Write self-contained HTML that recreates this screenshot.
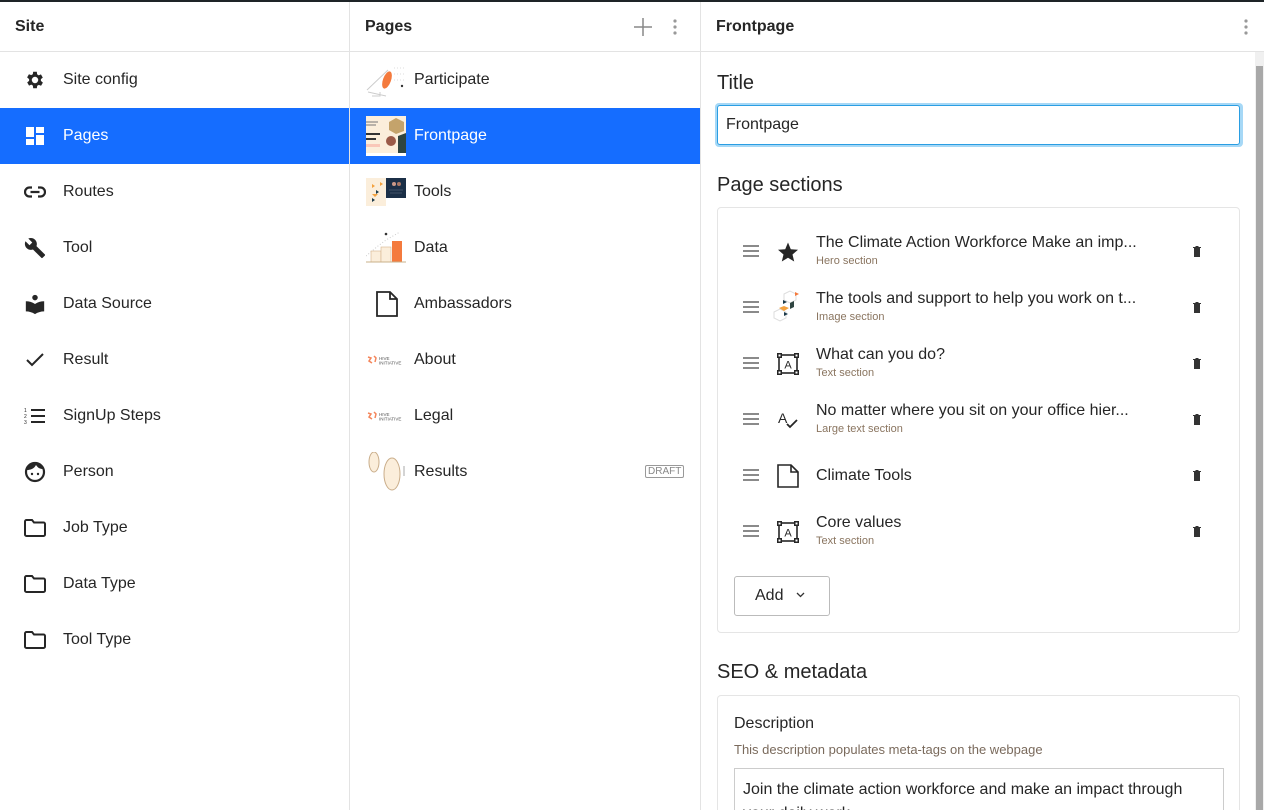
<!DOCTYPE html>
<html style="width:1264px;height:810px;overflow:hidden"><head><meta charset="utf-8"><style>
*{box-sizing:border-box;margin:0;padding:0}
body{width:1264px;height:810px;overflow:hidden;background:#fff;font-family:"Liberation Sans",sans-serif;color:#262626;position:relative}
.top{position:absolute;left:0;top:0;width:1264px;height:2px;background:#1e2427}
.col{position:absolute;top:2px;height:808px;border-right:1px solid #e3e3e3}
.hd{height:50px;border-bottom:1px solid #e3e3e3;display:flex;align-items:center;padding-left:15px;font-weight:bold;font-size:16px;position:relative}
.row{height:56px;display:flex;align-items:center;font-size:16px;position:relative}
.row.sel{background:#156dff;color:#fff}
.ic{width:24px;height:24px;margin-left:23px;margin-right:16px;display:flex;align-items:center;justify-content:center}
.th{width:40px;height:40px;margin-left:16px;margin-right:8px;position:relative;overflow:hidden}
.h2{font-size:20px;position:absolute;left:717px}
.card{position:absolute;left:717px;width:523px;border:1px solid #e5e5e5;border-radius:4px;overflow:hidden}
.it{position:absolute;left:0;width:521px;height:56px}
.it .dr{position:absolute;left:25px;top:21px;width:16px}
.it .dr i{display:block;height:2px;background:#8a8a8a;margin-bottom:3px}
.it .si{position:absolute;left:58px;top:16px;width:24px;height:24px}
.it .t{position:absolute;left:98px;top:10px;font-size:16px;white-space:nowrap}
.it .s{position:absolute;left:98px;top:31px;font-size:11px;color:#8a7560}
.it .tr{position:absolute;left:475px;top:22px;width:8px;height:11px}
</style></head><body>
<div class="top"></div>

<div class="col" style="left:0;width:350px">
 <div class="hd">Site</div>
 <div class="row"><div class="ic"><svg width="22" height="22" viewBox="0 0 24 24"><path fill="#262626" d="M19.4 13a7.5 7.5 0 000-2l2.1-1.6-2-3.5-2.5 1a7 7 0 00-1.7-1L15 3h-4l-.4 2.7a7 7 0 00-1.7 1l-2.5-1-2 3.5L6.6 11a7.5 7.5 0 000 2l-2.1 1.6 2 3.5 2.5-1a7 7 0 001.7 1L11 21h4l.4-2.7a7 7 0 001.7-1l2.5 1 2-3.5zM13 15.5a3.5 3.5 0 110-7 3.5 3.5 0 010 7z" transform="translate(-1 0)"/></svg></div>Site config</div>
 <div class="row sel"><div class="ic"><svg width="20" height="20" viewBox="0 0 20 20"><path fill="#fff" d="M1 1h8v10H1zM11 1h8v6h-8zM11 9h8v10h-8zM1 13h8v6H1z"/></svg></div>Pages</div>
 <div class="row"><div class="ic"><svg width="22" height="12" viewBox="0 0 22 12"><path fill="none" stroke="#262626" stroke-width="2.2" d="M8 1.5H5.5a4.5 4.5 0 000 9H8M14 1.5h2.5a4.5 4.5 0 010 9H14M6.5 6h9"/></svg></div>Routes</div>
 <div class="row"><div class="ic"><svg width="22" height="22" viewBox="0 0 24 24"><path fill="#262626" d="M22.7 19l-9.1-9.1c.9-2.3.4-5-1.5-6.9-2-2-5-2.4-7.4-1.3L9 6 6 9 1.6 4.7C.4 7.1.9 10.1 2.9 12.1c1.9 1.9 4.6 2.4 6.9 1.5l9.1 9.1c.4.4 1 .4 1.4 0l2.3-2.3c.5-.4.5-1.1.1-1.4z"/></svg></div>Tool</div>
 <div class="row"><div class="ic"><svg width="22" height="22" viewBox="0 0 24 24"><circle cx="12" cy="5" r="3" fill="#262626"/><path fill="#262626" d="M2 9c3.5 0 7 1 10 3 3-2 6.5-3 10-3v11c-3.5 0-7 1-10 3-3-2-6.5-3-10-3z"/></svg></div>Data Source</div>
 <div class="row"><div class="ic"><svg width="20" height="16" viewBox="0 0 20 16"><path fill="none" stroke="#262626" stroke-width="2" d="M2 8l5 5L18 2"/></svg></div>Result</div>
 <div class="row"><div class="ic"><svg width="22" height="18" viewBox="0 0 22 18"><path fill="#262626" d="M7 2h14v2H7zM7 8h14v2H7zM7 14h14v2H7z"/><text x="0" y="5" font-size="5" fill="#262626">1</text><text x="0" y="11" font-size="5" fill="#262626">2</text><text x="0" y="17" font-size="5" fill="#262626">3</text></svg></div>SignUp Steps</div>
 <div class="row"><div class="ic"><svg width="22" height="22" viewBox="0 0 22 22"><circle cx="11" cy="11" r="9" fill="none" stroke="#262626" stroke-width="2.2"/><path fill="#262626" d="M3 9c3 0 7-1 9-5 2 3 4 4 7 4l1-1-4-4-6-1-6 3z"/><circle cx="8" cy="13" r="1.2" fill="#262626"/><circle cx="14" cy="13" r="1.2" fill="#262626"/></svg></div>Person</div>
 <div class="row"><div class="ic"><svg width="24" height="20" viewBox="0 0 24 20"><path fill="none" stroke="#262626" stroke-width="2" d="M2 3.5a1.5 1.5 0 011.5-1.5H9l2 2.5h9.5A1.5 1.5 0 0122 6v10.5a1.5 1.5 0 01-1.5 1.5h-17A1.5 1.5 0 012 16.5z"/></svg></div>Job Type</div>
 <div class="row"><div class="ic"><svg width="24" height="20" viewBox="0 0 24 20"><path fill="none" stroke="#262626" stroke-width="2" d="M2 3.5a1.5 1.5 0 011.5-1.5H9l2 2.5h9.5A1.5 1.5 0 0122 6v10.5a1.5 1.5 0 01-1.5 1.5h-17A1.5 1.5 0 012 16.5z"/></svg></div>Data Type</div>
 <div class="row"><div class="ic"><svg width="24" height="20" viewBox="0 0 24 20"><path fill="none" stroke="#262626" stroke-width="2" d="M2 3.5a1.5 1.5 0 011.5-1.5H9l2 2.5h9.5A1.5 1.5 0 0122 6v10.5a1.5 1.5 0 01-1.5 1.5h-17A1.5 1.5 0 012 16.5z"/></svg></div>Tool Type</div>
</div>

<div class="col" style="left:350px;width:351px">
 <div class="hd">Pages
  <svg style="position:absolute;left:284px;top:16px" width="18" height="18" viewBox="0 0 18 18"><path stroke="#888" stroke-width="1.5" d="M9 0v18M0 9h18"/></svg>
  <svg style="position:absolute;left:323px;top:16px" width="4" height="18" viewBox="0 0 4 18"><circle cx="2" cy="3" r="1.6" fill="#999"/><circle cx="2" cy="9" r="1.6" fill="#999"/><circle cx="2" cy="15" r="1.6" fill="#999"/></svg>
 </div>
 <div class="row"><div class="th"><svg width="40" height="40" viewBox="0 0 40 40"><path fill="none" stroke="#ccc" d="M1 30L22 10M2 32l18 4 M6 36h8v-4"/><ellipse cx="21" cy="20" rx="4" ry="9" fill="#f47a3d" transform="rotate(20 21 20)"/><path stroke="#ddd" stroke-dasharray="1 2" d="M28 8h12M28 14h12M28 20h10"/><circle cx="36" cy="26" r="1.2" fill="#333"/></svg></div>Participate</div>
 <div class="row sel"><div class="th" style="background:#fcf0dc"><svg width="40" height="40" viewBox="0 0 40 40"><rect width="40" height="40" fill="#fbeedb"/><path stroke="#777" d="M0 6h12M0 9h10"/><path stroke="#333" stroke-width="2" d="M0 18h14M0 23h10"/><rect x="0" y="28" width="14" height="3" fill="#f9c7b8"/><polygon points="30,2 38,6 38,15 30,18 23,14 23,6" fill="#c4a36b"/><circle cx="25" cy="25" r="5" fill="#9a5a48"/><polygon points="32,20 40,17 40,38 32,40" fill="#2f4541"/><rect y="37" width="40" height="3" fill="#fff"/></svg></div>Frontpage</div>
 <div class="row"><div class="th"><svg width="40" height="40" viewBox="0 0 40 40"><rect width="20" height="28" y="6" fill="#fbeedb"/><path d="M6 12l3 2-3 2zM14 10l3 2-3 2zM6 22h6l-3 3z" fill="#f4a13d"/><path d="M10 18l3 2-3 2zM6 26l3 2-3 2z" fill="#1c3a4a"/><rect x="20" y="6" width="20" height="20" fill="#1b2f47"/><circle cx="28" cy="12" r="2" fill="#c98"/><circle cx="33" cy="12" r="2" fill="#a76"/><path stroke="#678" stroke-width=".5" d="M23 18h14M24 21h12"/></svg></div>Tools</div>
 <div class="row"><div class="th"><svg width="40" height="40" viewBox="0 0 40 40"><path stroke="#ccc" stroke-dasharray="1 2" fill="none" d="M0 28L12 18 20 12 34 4"/><circle cx="20" cy="6" r="1.3" fill="#333"/><rect x="5" y="23" width="10" height="11" fill="#fbeedb" stroke="#d6b48a" stroke-width=".6"/><rect x="15" y="19" width="10" height="15" fill="#fbeedb" stroke="#d6b48a" stroke-width=".6"/><rect x="26" y="13" width="10" height="21" fill="#f47a3d"/><path stroke="#c9b08a" d="M0 34h40"/></svg></div>Data</div>
 <div class="row"><div class="ic" style="margin-left:25px;margin-right:15px"><svg width="22" height="26" viewBox="0 0 22 26"><path fill="none" stroke="#262626" stroke-width="1.8" d="M1 1h13l7 7v17H1zM14 1v7h7"/></svg></div>Ambassadors</div>
 <div class="row"><div class="th"><svg width="40" height="40" viewBox="0 0 40 40"><path d="M2 17l3 1-2 3 3 2M8 16l2 2-1 4" stroke="#f4855a" stroke-width="1.5" fill="none"/><text x="13" y="20" font-size="4.5" fill="#555" font-family="Liberation Sans">HIVE</text><text x="13" y="24.5" font-size="4.5" fill="#555" font-family="Liberation Sans">INITIATIVE</text></svg></div>About</div>
 <div class="row"><div class="th"><svg width="40" height="40" viewBox="0 0 40 40"><path d="M2 17l3 1-2 3 3 2M8 16l2 2-1 4" stroke="#f4855a" stroke-width="1.5" fill="none"/><text x="13" y="20" font-size="4.5" fill="#555" font-family="Liberation Sans">HIVE</text><text x="13" y="24.5" font-size="4.5" fill="#555" font-family="Liberation Sans">INITIATIVE</text></svg></div>Legal</div>
 <div class="row"><div class="th"><svg width="40" height="40" viewBox="0 0 40 40"><ellipse cx="8" cy="10" rx="5" ry="10" fill="#fbeedb" stroke="#c9ad8a"/><ellipse cx="26" cy="22" rx="8" ry="16" fill="#fbeedb" stroke="#c9ad8a"/><path stroke="#aaa" d="M38 14v10"/></svg></div>Results
  <span style="position:absolute;left:295px;top:21px;border:1px solid #999;border-radius:2px;font-size:10px;color:#888;padding:0 2px;line-height:11px">DRAFT</span></div>
</div>

<div class="col" style="left:701px;width:563px;border-right:none">
 <div class="hd">Frontpage
  <svg style="position:absolute;left:543px;top:16px" width="4" height="18" viewBox="0 0 4 18"><circle cx="2" cy="3" r="1.6" fill="#999"/><circle cx="2" cy="9" r="1.6" fill="#999"/><circle cx="2" cy="15" r="1.6" fill="#999"/></svg>
 </div>
</div>
<div style="position:absolute;left:1255px;top:52px;width:9px;height:758px;background:#f0f0f0"></div>
<div style="position:absolute;left:1256px;top:66px;width:7px;height:744px;background:#a8a8a8"></div>

<div class="h2" style="top:72px">Title</div>
<div style="position:absolute;left:715px;top:103px;width:528px;height:44px;border-radius:4px;background:#a6d8f6"></div>
<div style="position:absolute;left:717px;top:105px;width:523px;height:40px;border:1px solid #2a9ee3;border-radius:3px;background:#fff;font-size:16px;padding:10px 8px">Frontpage</div>

<div class="h2" style="top:174px">Page sections</div>
<div class="card" style="top:207px;height:426px">
 <div class="it" style="top:16px"><div class="dr"><i></i><i></i><i></i></div>
  <svg class="si" viewBox="0 0 24 24"><path fill="#262626" d="M12 2.5l2.8 6.7 7.2.6-5.5 4.7 1.7 7-6.2-3.8-6.2 3.8 1.7-7L2 9.8l7.2-.6z"/></svg>
  <div class="t">The Climate Action Workforce Make an imp...</div><div class="s">Hero section</div>
  <svg class="tr" viewBox="0 0 8 11"><path fill="#333" d="M0 1h8v1H0zM2.5 0h3v1h-3zM1 2h6v9H1z"/></svg></div>
 <div class="it" style="top:72px"><div class="dr"><i></i><i></i><i></i></div>
  <svg class="si" style="left:52px;top:8px;width:34px;height:34px" viewBox="0 0 34 34"><path stroke="#ddd" fill="none" d="M14 6l6-3 6 3v6l-6 3-6-3zM4 24l6-3 6 3v6l-6 3-6-3z"/><path d="M25 4l4 2-4 2z" fill="#f47a3d"/><path d="M13 12l4 2-4 2zM14 24l4 2-4 2z" fill="#1c3a4a"/><path d="M9 20l5-2 5 2-5 3z" fill="#f4a13d"/><path d="M20 15l4-2v6l-4 2z" fill="#2f4541"/></svg>
  <div class="t">The tools and support to help you work on t...</div><div class="s">Image section</div>
  <svg class="tr" viewBox="0 0 8 11"><path fill="#333" d="M0 1h8v1H0zM2.5 0h3v1h-3zM1 2h6v9H1z"/></svg></div>
 <div class="it" style="top:128px"><div class="dr"><i></i><i></i><i></i></div>
  <svg class="si" viewBox="0 0 24 24"><rect x="3" y="3" width="18" height="18" fill="none" stroke="#262626" stroke-width="1.6"/><path fill="#262626" d="M1 1h5v5H1zM18 1h5v5h-5zM1 18h5v5H1zM18 18h5v5h-5z"/><path fill="#fff" d="M2.5 2.5h2v2h-2zM19.5 2.5h2v2h-2zM2.5 19.5h2v2h-2zM19.5 19.5h2v2h-2z"/><text x="12" y="16.5" text-anchor="middle" font-size="11" font-family="Liberation Sans" fill="#262626">A</text></svg>
  <div class="t">What can you do?</div><div class="s">Text section</div>
  <svg class="tr" viewBox="0 0 8 11"><path fill="#333" d="M0 1h8v1H0zM2.5 0h3v1h-3zM1 2h6v9H1z"/></svg></div>
 <div class="it" style="top:184px"><div class="dr"><i></i><i></i><i></i></div>
  <svg class="si" viewBox="0 0 24 24"><text x="2" y="15" font-size="14" font-family="Liberation Sans" fill="#262626">A</text><path fill="none" stroke="#262626" stroke-width="1.8" d="M11 16l3 3 7-7"/></svg>
  <div class="t">No matter where you sit on your office hier...</div><div class="s">Large text section</div>
  <svg class="tr" viewBox="0 0 8 11"><path fill="#333" d="M0 1h8v1H0zM2.5 0h3v1h-3zM1 2h6v9H1z"/></svg></div>
 <div class="it" style="top:240px"><div class="dr"><i></i><i></i><i></i></div>
  <svg class="si" viewBox="0 0 24 24"><path fill="none" stroke="#262626" stroke-width="1.6" d="M2 1h13l7 7v15H2zM15 1v7h7"/></svg>
  <div class="t" style="top:19px">Climate Tools</div>
  <svg class="tr" viewBox="0 0 8 11"><path fill="#333" d="M0 1h8v1H0zM2.5 0h3v1h-3zM1 2h6v9H1z"/></svg></div>
 <div class="it" style="top:296px"><div class="dr"><i></i><i></i><i></i></div>
  <svg class="si" viewBox="0 0 24 24"><rect x="3" y="3" width="18" height="18" fill="none" stroke="#262626" stroke-width="1.6"/><path fill="#262626" d="M1 1h5v5H1zM18 1h5v5h-5zM1 18h5v5H1zM18 18h5v5h-5z"/><path fill="#fff" d="M2.5 2.5h2v2h-2zM19.5 2.5h2v2h-2zM2.5 19.5h2v2h-2zM19.5 19.5h2v2h-2z"/><text x="12" y="16.5" text-anchor="middle" font-size="11" font-family="Liberation Sans" fill="#262626">A</text></svg>
  <div class="t">Core values</div><div class="s">Text section</div>
  <svg class="tr" viewBox="0 0 8 11"><path fill="#333" d="M0 1h8v1H0zM2.5 0h3v1h-3zM1 2h6v9H1z"/></svg></div>
 <div style="position:absolute;left:16px;top:368px;width:96px;height:40px;border:1px solid #bbb;border-radius:3px;font-size:16px;padding:10px 0 0 20px">Add <svg style="margin-left:8px;vertical-align:2px" width="9" height="6" viewBox="0 0 9 6"><path fill="none" stroke="#333" stroke-width="1.3" d="M1 1l3.5 3.5L8 1"/></svg></div>
</div>

<div class="h2" style="top:661px">SEO &amp; metadata</div>
<div class="card" style="top:695px;height:115px;border-bottom:none;border-radius:4px 4px 0 0">
 <div style="position:absolute;left:16px;top:19px;font-size:16px">Description</div>
 <div style="position:absolute;left:16px;top:46px;font-size:13px;color:#7a6a5c">This description populates meta-tags on the webpage</div>
 <div style="position:absolute;left:16px;top:72px;width:490px;height:60px;border:1px solid #ccc;font-size:16px;padding:9px 8px;line-height:24px">Join the climate action workforce and make an impact through your daily work</div>
</div>
</body></html>
